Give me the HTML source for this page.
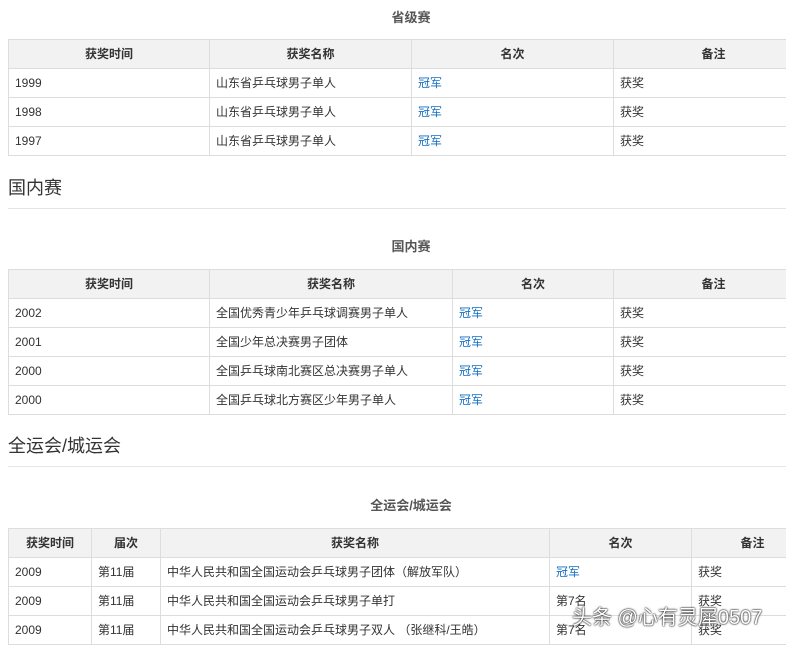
<!DOCTYPE html><html><head><meta charset="utf-8"><style>
body{margin:0;width:786px;height:642px;overflow:hidden;background:#fff;font-family:"Liberation Sans","Noto Sans CJK SC",sans-serif;color:#333;position:relative}
.cap{position:absolute;left:8px;width:806px;text-align:center;font-size:13px;font-weight:bold;color:#555}
table{position:absolute;left:8px;border-collapse:collapse;font-size:12px;table-layout:fixed}
td,th{border:1px solid #ddd;height:28px;line-height:28px;padding:0 6px;text-align:left;white-space:nowrap;overflow:hidden;vertical-align:middle}
td span,th span{display:inline-block;vertical-align:middle;line-height:16px}
th{background:#f2f2f2;text-align:center;font-weight:bold;height:28px;color:#333}
a{color:#136ec2;text-decoration:none}
.h{position:absolute;left:8px;font-size:18px;color:#333;width:778px;border-bottom:1px solid #e5e5e5;padding-bottom:8px}
.wm{position:absolute;left:572px;top:601px;font-size:20px;color:#fff;text-shadow:0 0 2px #000,0 0 1px #000}
</style></head><body>
<div class="cap" style="top:7px">省级赛</div>
<table style="top:39px;width:806px"><colgroup><col style="width:201px"><col style="width:202px"><col style="width:202px"><col></colgroup>
<tr><th>获奖时间</th><th>获奖名称</th><th>名次</th><th>备注</th></tr>
<tr><td>1999</td><td>山东省乒乓球男子单人</td><td><a>冠军</a></td><td>获奖</td></tr>
<tr><td>1998</td><td>山东省乒乓球男子单人</td><td><a>冠军</a></td><td>获奖</td></tr>
<tr><td>1997</td><td>山东省乒乓球男子单人</td><td><a>冠军</a></td><td>获奖</td></tr></table>
<div class="h" style="top:174px">国内赛</div>
<div class="cap" style="top:236px">国内赛</div>
<table style="top:269px;width:806px"><colgroup><col style="width:201px"><col style="width:243px"><col style="width:161px"><col></colgroup>
<tr><th>获奖时间</th><th>获奖名称</th><th>名次</th><th>备注</th></tr>
<tr><td>2002</td><td>全国优秀青少年乒乓球调赛男子单人</td><td><a>冠军</a></td><td>获奖</td></tr>
<tr><td>2001</td><td>全国少年总决赛男子团体</td><td><a>冠军</a></td><td>获奖</td></tr>
<tr><td>2000</td><td>全国乒乓球南北赛区总决赛男子单人</td><td><a>冠军</a></td><td>获奖</td></tr>
<tr><td>2000</td><td>全国乒乓球北方赛区少年男子单人</td><td><a>冠军</a></td><td>获奖</td></tr></table>
<div class="h" style="top:432px">全运会/城运会</div>
<div class="cap" style="top:495px">全运会/城运会</div>
<table style="top:528px;width:806px"><colgroup><col style="width:83px"><col style="width:69px"><col style="width:389px"><col style="width:142px"><col></colgroup>
<tr><th>获奖时间</th><th>届次</th><th>获奖名称</th><th>名次</th><th>备注</th></tr>
<tr><td>2009</td><td>第11届</td><td>中华人民共和国全国运动会乒乓球男子团体（解放军队）</td><td><a>冠军</a></td><td>获奖</td></tr>
<tr><td>2009</td><td>第11届</td><td>中华人民共和国全国运动会乒乓球男子单打</td><td>第7名</td><td>获奖</td></tr>
<tr><td>2009</td><td>第11届</td><td>中华人民共和国全国运动会乒乓球男子双人 （张继科/王皓）</td><td>第7名</td><td>获奖</td></tr></table>
<div class="wm">头条 @心有灵犀0507</div>
</body></html>
